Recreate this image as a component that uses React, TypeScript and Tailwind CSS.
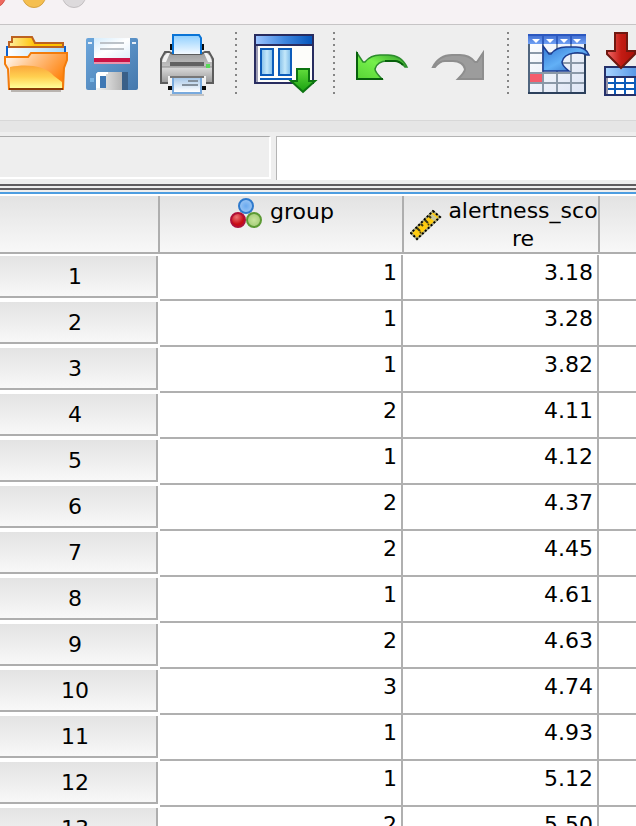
import type { ReactNode } from "react";

const rows: [number, string][] = [
  [1, "3.18"],
  [1, "3.28"],
  [1, "3.82"],
  [2, "4.11"],
  [1, "4.12"],
  [2, "4.37"],
  [2, "4.45"],
  [1, "4.61"],
  [2, "4.63"],
  [3, "4.74"],
  [1, "4.93"],
  [1, "5.12"],
  [2, "5.50"],
];

function Gradient({ id, from, to, mid, across }: { id: string; from: string; to: string; mid?: string; across?: boolean }) {
  return (
    <linearGradient id={id} x1="0" y1="0" x2={across ? "1" : "0"} y2={across ? "0" : "1"}>
      <stop offset="0" stopColor={from} />
      {mid && <stop offset="0.5" stopColor={mid} />}
      <stop offset="1" stopColor={to} />
    </linearGradient>
  );
}

function OpenIcon() {
  return (
    <svg viewBox="0 0 64 64" className="size-16">
      <defs>
        <Gradient id="fTab" from="#fff0a0" mid="#ffc000" to="#ffd860" across />
        <Gradient id="fPaper" from="#ffffff" to="#a8dcff" across />
        <linearGradient id="fFront" x1="0" y1="0" x2="1" y2="0.5">
          <stop offset="0" stopColor="#ffffff" />
          <stop offset="0.45" stopColor="#ffc48a" />
          <stop offset="1" stopColor="#ff8410" />
        </linearGradient>
        <Gradient id="fWave" from="#fba63c" mid="#ffd050" to="#ffff98" />
      </defs>
      <rect x="7" y="57" width="50" height="3" fill="#b9b4b0" />
      <path d="M5 16V10h3V5h20l3 6h28v5z" fill="url(#fTab)" stroke="#bd6220" strokeWidth="2" />
      <path d="M32 12h26v3H32z" fill="#ffc400" />
      <rect x="2" y="14" width="2" height="12" fill="#0d62d0" />
      <rect x="60" y="14" width="2" height="12" fill="#0d62d0" />
      <rect x="4" y="14" width="56" height="2" fill="#bd6220" />
      <rect x="4" y="16" width="56" height="10" fill="url(#fPaper)" />
      <path d="M1 25h23l3-4h36v7l-3 8-1 21H5L4 37 1 32z" fill="url(#fFront)" stroke="#f27c0c" strokeWidth="2" />
      <path d="M6 35c16-3 34-2 44 9l8 6v6H6z" fill="url(#fWave)" />
      <path d="M5 57h54" stroke="#8a3c08" strokeWidth="2" />
    </svg>
  );
}

function SaveIcon() {
  return (
    <svg viewBox="0 0 64 64" className="size-16">
      <defs>
        <linearGradient id="sBody" x1="0" y1="0" x2="1" y2="1">
          <stop offset="0" stopColor="#6ba6dc" />
          <stop offset="1" stopColor="#4578ac" />
        </linearGradient>
        <linearGradient id="sLabel" x1="0" y1="0" x2="1" y2="1">
          <stop offset="0" stopColor="#d4ecfc" />
          <stop offset="0.5" stopColor="#ffffff" />
          <stop offset="1" stopColor="#dfeefa" />
        </linearGradient>
        <Gradient id="sMetal" from="#f4f4f4" to="#b4b4b4" across />
      </defs>
      <rect x="6" y="6" width="52" height="52" rx="2" fill="url(#sBody)" />
      <path d="M8 10h4v2H8zM52 10h4v2h-4z" fill="#e6eef6" />
      <rect x="14" y="6" width="36" height="20" fill="url(#sLabel)" />
      <path d="M20 10h24v2H20zM20 16h24v2H20z" fill="#bcc2c8" />
      <rect x="14" y="26" width="36" height="4" fill="#cb1245" />
      <rect x="14" y="30" width="36" height="2" fill="#e795ae" />
      <path d="M16 42l2-2h24v18H16z" fill="url(#sMetal)" />
      <path d="M16 42l2-2h10v2h-2v14H16z" fill="#fff" />
      <rect x="42" y="40" width="6" height="18" fill="#395f88" />
      <rect x="20" y="44" width="6" height="12" fill="#3f78b4" />
      <rect x="10" y="46" width="4" height="4" fill="#79b4e4" />
    </svg>
  );
}

function PrintIcon() {
  return (
    <svg viewBox="0 0 64 64" className="size-16">
      <defs>
        <Gradient id="pPaper" from="#8fcfff" to="#f4faff" />
        <Gradient id="pTop" from="#9a9a9a" to="#f0f0f0" />
        <Gradient id="pFront" from="#dcdcdc" to="#9c9c9c" />
        <Gradient id="pOut" from="#a8c8e8" to="#ffffff" />
      </defs>
      <path d="M14 12h34v6H14zM12 54h38v4H12z" fill="#0a0a0a" />
      <path d="M5 51V27l4-7h4l4 2h28l4-2h4l4 7v24z" fill="url(#pTop)" stroke="#5c5c5c" strokeWidth="2" />
      <path d="M17 22V3h26l2 3v16z" fill="url(#pPaper)" />
      <path d="M17 22V3h26l2 3v16" fill="none" stroke="#0a74d6" strokeWidth="2" />
      <path d="M8 24l3-3h3l-4 9H6zM54 24l-3-3h-3l4 9h4z" fill="#f2f2f2" />
      <rect x="6" y="35" width="50" height="15" fill="url(#pFront)" />
      <rect x="14" y="30" width="34" height="4" fill="#626262" />
      <path d="M6 35h50" stroke="#8a8a8a" strokeWidth="1" />
      <rect x="50" y="32" width="4" height="4" fill="#58d858" />
      <path d="M12 44h38v8H12z" fill="#f2f2f2" />
      <path d="M14 44h34v2H14z" fill="#777" />
      <rect x="16" y="46" width="30" height="16" fill="#78aade" />
      <rect x="18" y="46" width="26" height="14" fill="url(#pOut)" />
      <path d="M32 48h10v2H32zM26 52h16v2H26z" fill="#84909c" />
      <path d="M14 62h34v2H14z" fill="#c4c4c4" />
    </svg>
  );
}

function RecallDialogIcon() {
  return (
    <svg viewBox="0 0 64 64" className="size-16">
      <defs>
        <Gradient id="dTitle" from="#9cc4ff" mid="#4088e0" to="#0656bc" across />
        <Gradient id="dPane" from="#80bce8" mid="#c4e8fa" to="#78b8e8" across />
        <Gradient id="dArrow" from="#62dc3c" to="#18a010" />
      </defs>
      <rect x="0" y="2" width="60" height="50" fill="#282c60" />
      <rect x="2" y="4" width="56" height="8" fill="url(#dTitle)" />
      <rect x="2" y="14" width="56" height="36" fill="#fdfdfa" />
      <rect x="2" y="14" width="2" height="36" fill="#9c9cb4" />
      <rect x="7" y="17" width="12" height="26" fill="url(#dPane)" stroke="#0c5cba" strokeWidth="2" />
      <rect x="25" y="17" width="12" height="26" fill="url(#dPane)" stroke="#0c5cba" strokeWidth="2" />
      <rect x="6" y="46" width="32" height="2" fill="#0c5cba" />
      <path d="M43 37h12v12h6L49 60 37 49h6z" fill="url(#dArrow)" stroke="#0c7410" strokeWidth="2" />
    </svg>
  );
}

function UndoIcon() {
  return (
    <svg viewBox="0 0 64 64" className="size-16">
      <defs>
        <linearGradient id="uFill" x1="0" y1="1" x2="1" y2="0">
          <stop offset="0" stopColor="#58d436" />
          <stop offset="0.5" stopColor="#76f04c" />
          <stop offset="1" stopColor="#2c9428" />
        </linearGradient>
      </defs>
      <path
        d="M5 21l6 9h2c4-5 8-7 15-7h8c9 0 15 4 19 12h-2c-3-4-6-6-10-6h-8c-6 0-11 3-12 8 0 3 3 6 7 10H5z"
        fill="url(#uFill)"
        stroke="#2c8c2c"
        strokeWidth="1.5"
      />
      <path d="M5 20v27h26M33 29h10c4 0 6 2 8 4" fill="none" stroke="#07600c" strokeWidth="2" />
    </svg>
  );
}

function RedoIcon() {
  return (
    <svg viewBox="0 0 64 64" className="size-16">
      <path
        d="M55 21l-6 9h-2c-4-5-8-7-15-7h-8c-9 0-15 4-19 12h2c3-4 6-6 10-6h8c6 0 11 3 12 8 0 3-3 6-7 10h25z"
        fill="#9c9c9c"
        stroke="#8e8e8e"
        strokeWidth="2"
      />
    </svg>
  );
}

function GoToCaseIcon() {
  return (
    <svg viewBox="0 0 64 64" className="size-16">
      <defs>
        <linearGradient id="gCells" x1="0" y1="0" x2="1" y2="1">
          <stop offset="0" stopColor="#ffffff" />
          <stop offset="1" stopColor="#dce4f4" />
        </linearGradient>
        <Gradient id="gHead" from="#3c68cc" to="#6fa0f4" />
        <linearGradient id="gArrow" x1="0" y1="0" x2="1" y2="1">
          <stop offset="0" stopColor="#3478d4" />
          <stop offset="0.5" stopColor="#62b0f6" />
          <stop offset="1" stopColor="#2860b8" />
        </linearGradient>
      </defs>
      <rect x="3" y="3" width="56" height="58" fill="url(#gCells)" stroke="#50657e" strokeWidth="2" />
      <path d="M17 12v48M31 12v48M45 12v48M4 21h54M4 31h54M4 41h54M4 51h54" stroke="#8a98a8" strokeWidth="2" />
      <rect x="2" y="2" width="58" height="10" fill="url(#gHead)" />
      <path d="M17 3v9M31 3v9M45 3v9" stroke="#2f5cc0" strokeWidth="2" />
      <path d="M2 3h58" stroke="#2c58c0" strokeWidth="2" />
      <path d="M6 7h8l-4 4zM20 7h8l-4 4zM34 7h8l-4 4zM47 7h8l-4 4z" fill="#fff" />
      <rect x="4" y="42" width="12" height="8" fill="#f45c6c" />
      <path d="M2 61h58M59 12v50" stroke="#2c405c" strokeWidth="2" />
      <path
        d="M17 14l6 8h2c3-4 8-7 15-7h10c7 0 11 3 13 8h-2c-4-2-8-3-13-2-7 1-11 4-12 9 0 3 3 6 7 9H17z"
        fill="url(#gArrow)"
        stroke="#1c3c90"
        strokeWidth="1.5"
      />
    </svg>
  );
}

function InsertCaseIcon() {
  return (
    <svg viewBox="0 0 64 64" className="size-16">
      <defs>
        <Gradient id="iHead" from="#a8d4ff" mid="#5c9ce8" to="#1c60c0" across />
        <linearGradient id="iArrow" x1="0" y1="0" x2="1" y2="0">
          <stop offset="0" stopColor="#f06868" />
          <stop offset="0.5" stopColor="#c41c14" />
          <stop offset="1" stopColor="#a81008" />
        </linearGradient>
      </defs>
      <rect x="2" y="34" width="60" height="30" fill="#24306a" />
      <rect x="4" y="36" width="56" height="8" fill="url(#iHead)" />
      <rect x="4" y="46" width="56" height="16" fill="#0c5cba" />
      <rect x="4" y="46" width="2" height="16" fill="#9494a8" />
      <path
        d="M6 46h6v4H6zM14 46h8v4h-8zM24 46h8v4h-8zM34 46h8v4h-8zM44 46h8v4h-8zM6 52h6v4H6zM14 52h8v4h-8zM24 52h8v4h-8zM34 52h8v4h-8zM44 52h8v4h-8zM6 58h6v4H6zM14 58h8v4h-8zM24 58h8v4h-8zM34 58h8v4h-8zM44 58h8v4h-8z"
        fill="#fff"
      />
      <path d="M13 1h12v18h8v3L19 36 5 22v-3h8z" fill="url(#iArrow)" stroke="#701810" strokeWidth="2" />
    </svg>
  );
}

function NominalIcon() {
  return (
    <svg viewBox="0 0 32 32" className="size-8 shrink-0">
      <defs>
        <radialGradient id="nBlue">
          <stop offset="0" stopColor="#6aaaf0" />
          <stop offset="1" stopColor="#9cc6f4" />
        </radialGradient>
        <radialGradient id="nRed" cx="0.4" cy="0.3">
          <stop offset="0" stopColor="#ec7474" />
          <stop offset="1" stopColor="#c80c14" />
        </radialGradient>
        <radialGradient id="nGreen">
          <stop offset="0" stopColor="#c8e49c" />
          <stop offset="1" stopColor="#a4cc78" />
        </radialGradient>
      </defs>
      <circle cx="16" cy="8" r="7" fill="url(#nBlue)" stroke="#2f7acc" strokeWidth="2" />
      <circle cx="8" cy="22" r="7" fill="url(#nRed)" stroke="#ae1038" strokeWidth="2" />
      <circle cx="24" cy="22" r="7" fill="url(#nGreen)" stroke="#5c9a34" strokeWidth="2" />
    </svg>
  );
}

function ScaleIcon() {
  return (
    <svg viewBox="0 0 32 32" className="size-8 shrink-0">
      <path d="M23 2l7 6L7 30l-6-6z" fill="#ffcc10" stroke="#a4a47c" strokeWidth="2" />
      <path d="M22 5l5 4-3 3-5-4z" fill="#c8c89c" />
      <path d="M23 2l7 6L7 30l-6-6z" fill="none" stroke="#000" strokeWidth="2" strokeDasharray="2 2" />
      <path d="M19 7l2 2M15 11l3 3M11 15l2 2M7 19l3 3M18 15l1 1M10 23l1 1" stroke="#3c3814" strokeWidth="2" />
    </svg>
  );
}

function Tool({ label, children }: { label: string; children: ReactNode }) {
  return (
    <button type="button" aria-label={label} className="size-16 shrink-0">
      {children}
    </button>
  );
}

function Separator() {
  return (
    <div className="ml-[15px] mr-[17px] flex h-16 w-0.5 shrink-0 flex-col gap-1">
      {Array.from({ length: 11 }, (_, i) => (
        <span key={i} className="h-0.5 w-0.5 shrink-0 bg-[#858585]" />
      ))}
    </div>
  );
}

function HeaderCell({ children }: { children?: ReactNode }) {
  return (
    <th scope="col" className="group p-0 pb-px align-top font-normal">
      <div className="flex h-[58px] justify-center border-r-2 border-b-2 border-[#aeaeae] bg-linear-to-b from-[#e3e3e3] to-[#f8f8f8] pt-px group-last:border-r-0">
        {children}
      </div>
    </th>
  );
}

function DataCell({ children }: { children: ReactNode }) {
  return (
    <td className="border-b-2 border-[#b0b0b0] p-0 align-top">
      <div className="mr-px h-11 border-r-2 border-[#b0b0b0] pt-1 pr-1 text-right">{children}</div>
    </td>
  );
}

export default function App() {
  return (
    <div className="flex h-screen flex-col overflow-hidden bg-white font-['DejaVu_Sans',sans-serif] text-[22px] leading-7 text-black">
      <header className="h-[25px] shrink-0 overflow-hidden border-b border-[#c6c4c5] bg-[#f6f2f4]">
        <div className="-mt-4 -ml-[18px] flex gap-4">
          <button type="button" aria-label="Close" className="size-6 rounded-full border border-[#d3554c] bg-[#ee6a5f]" />
          <button type="button" aria-label="Minimize" className="size-6 rounded-full border border-[#d5a243] bg-[#f5bf4f]" />
          <button type="button" aria-label="Zoom" className="size-6 rounded-full border border-[#c3bfc1] bg-[#dddadc]" />
        </div>
      </header>

      <div className="flex h-24 shrink-0 overflow-hidden border-b border-[#d8d8d8] bg-[#eeeeee] pt-[7px] pl-1">
        <div className="flex gap-3">
          <Tool label="Open"><OpenIcon /></Tool>
          <Tool label="Save"><SaveIcon /></Tool>
          <Tool label="Print"><PrintIcon /></Tool>
        </div>
        <Separator />
        <Tool label="Recall recent dialogs"><RecallDialogIcon /></Tool>
        <Separator />
        <div className="flex gap-3">
          <Tool label="Undo"><UndoIcon /></Tool>
          <Tool label="Redo"><RedoIcon /></Tool>
        </div>
        <Separator />
        <div className="flex gap-3">
          <Tool label="Go to case"><GoToCaseIcon /></Tool>
          <Tool label="Insert case"><InsertCaseIcon /></Tool>
        </div>
      </div>
      <div className="h-[11px] shrink-0 bg-[#e6e6e6]" />

      <div className="flex shrink-0 gap-[5px] bg-[#eeeeee] pt-1 pb-1">
        <input
          aria-label="Cell reference"
          readOnly
          className="h-[43px] w-[271px] shrink-0 border-t border-r-2 border-b-2 border-t-[#ababab] border-r-white border-b-white bg-[#eeeeee] px-2 outline-none"
        />
        <input
          aria-label="Cell value"
          className="h-11 min-w-0 flex-1 border-t border-l border-[#b4b4b4] bg-white px-2 outline-none"
        />
      </div>
      <div className="h-0.5 shrink-0 bg-[#5f5d60]" />
      <div className="h-0.5 shrink-0 bg-[#eeeeee]" />
      <div className="h-0.5 shrink-0 bg-[#5f5d60]" />
      <div className="h-0.5 shrink-0 bg-[#eeeeee]" />
      <div className="mb-0.5 h-0.5 shrink-0 bg-[#4d9de0]" />

      <main className="min-h-0 flex-1 overflow-hidden">
        <table className="w-full table-fixed border-separate border-spacing-0">
          <colgroup>
            <col className="w-[160px]" />
            <col className="w-[244px]" />
            <col className="w-[196px]" />
            <col />
          </colgroup>
          <thead>
            <tr>
              <HeaderCell />
              <HeaderCell>
                <div className="flex items-start gap-2 pt-px pl-0.5">
                  <NominalIcon />
                  <span>group</span>
                </div>
              </HeaderCell>
              <HeaderCell>
                <div className="flex w-full items-center pl-1.5">
                  <ScaleIcon />
                  <span className="ml-1.5 flex-1 text-center break-all">alertness_score</span>
                </div>
              </HeaderCell>
              <HeaderCell />
            </tr>
          </thead>
          <tbody>
            {rows.map(([group, score], i) => (
              <tr key={i}>
                <th scope="row" className="p-0 pt-px pr-0.5 align-top font-normal">
                  <div className="mb-[3px] h-[42px] border-r-2 border-b-2 border-[#aeaeae] bg-linear-to-b from-[#e3e3e3] to-[#f8f8f8] pt-[7px] pr-1.5 text-center">
                    {i + 1}
                  </div>
                </th>
                <DataCell>{group}</DataCell>
                <DataCell>{score}</DataCell>
                <td className="border-b-2 border-[#b0b0b0] p-0" />
              </tr>
            ))}
          </tbody>
        </table>
      </main>
    </div>
  );
}
